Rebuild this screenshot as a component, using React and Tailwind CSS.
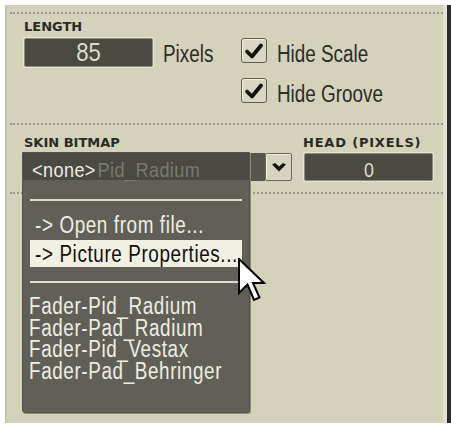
import React from "react";

const SANS = "font-['Liberation_Sans',Arial,sans-serif]";

function N({ className = "", children }) {
  return (
    <span className={`inline-block origin-left scale-x-[0.82] whitespace-nowrap ${SANS} ${className}`}>
      {children}
    </span>
  );
}

function Dotted() {
  return <div className="h-0 border-t-2 border-dotted border-[#9a998a]" />;
}

function Label({ children, className = "" }) {
  return (
    <div
      className={`h-[13px] leading-[13px] text-[13px] font-bold text-[#2a2a28] font-['DejaVu_Sans',sans-serif] whitespace-nowrap ${className}`}
    >
      {children}
    </div>
  );
}

function Check() {
  return (
    <div className="shrink-0 w-[26px] h-[25px] rounded-[3px] border-[1.5px] border-[#5f5e54] bg-[#d9d7c4] shadow-[inset_1px_1px_0_#f1efe0] flex items-center justify-center">
      <svg width="20" height="18" viewBox="0 0 20 18">
        <path d="M3 9.5 L8 14.5 L17 3.5" fill="none" stroke="#111" strokeWidth="3.8" strokeLinecap="round" strokeLinejoin="round" />
      </svg>
    </div>
  );
}

function CheckRow({ label }) {
  return (
    <div className="flex items-start gap-[10px] h-[25px]">
      <Check />
      <N className="text-[23px] leading-[32px] text-[#2c2c28]">{label}</N>
    </div>
  );
}

function Cursor() {
  return (
    <svg
      className="absolute left-[231px] top-[253px]"
      width="28"
      height="46"
      viewBox="0 0 28 46"
    >
      <polygon
        points="1,1 1,35 9.5,26.5 16,42 21.5,39.5 15,25 26,25"
        fill="#fff"
        stroke="#000"
        strokeWidth="2"
        strokeLinejoin="miter"
      />
    </svg>
  );
}

export default function App() {
  return (
    <div className="w-[451px] h-[428px] bg-white pt-[5px] pl-[5px] pb-[5px]">
      <div className="relative h-full bg-[#d4d2bb] border-l-2 border-l-[#c2c1b2] border-r-4 border-r-[#2d2d2a]">
        <div className="h-full border-r-4 border-r-[#e2e1d5] pl-[3px] pt-[7px]">
          <Dotted />
          {/* LENGTH section */}
          <div className="pl-[14px] pt-[6px] pb-[20px]">
            <Label>LENGTH</Label>
            <div className="flex items-start mt-[5px]">
              <div className="w-[129px] h-[29px] rounded-[2px] bg-[#4a4942] border border-[#8d8c7c] shadow-[0_0_0_1px_#e6e4d3] text-center">
                <span className={`inline-block scale-x-[0.85] ${SANS} text-[26px] leading-[27px] text-[#dedcce]`}>85</span>
              </div>
              <div className="w-[78px] ml-[10px] h-[29px]">
                <N className="text-[23px] leading-[32px] text-[#2c2c28]">Pixels</N>
              </div>
              <div className="flex flex-col gap-[15px]">
                <CheckRow label="Hide Scale" />
                <CheckRow label="Hide Groove" />
              </div>
            </div>
          </div>
          <Dotted />
          {/* SKIN BITMAP section */}
          <div className="pl-[14px] pt-[11px] pb-[11px] flex">
            <div className="flex flex-col">
              <Label>SKIN BITMAP</Label>
              <div className="flex mt-[4px] h-[28px]">
                <div className="w-[241px] h-full rounded-l-[2px] bg-[#56554d]" />
                <div className="w-[27px] h-full rounded-[2px] bg-[#d6d4c0] border border-[#6a695d] shadow-[inset_1px_1px_0_#f0eedf] flex items-center justify-center">
                  <svg width="14" height="9" viewBox="0 0 14 9">
                    <polygon points="0,1.5 3,0 7,3.5 11,0 14,1.5 7,8.5" fill="#111" />
                  </svg>
                </div>
              </div>
            </div>
            <div className="flex flex-col ml-[11px]">
              <Label className="tracking-[0.8px]">HEAD (PIXELS)</Label>
              <div className="mt-[4px] ml-[1px] w-[129px] h-[28px] rounded-[2px] bg-[#4a4942] border border-[#8d8c7c] shadow-[0_0_0_1px_#e6e4d3] text-center">
                <span className={`inline-block scale-x-[0.85] ${SANS} text-[21px] leading-[31px] text-[#dedcce]`}>0</span>
              </div>
            </div>
          </div>
          <Dotted />
        </div>

        {/* Dropdown popup */}
        <div className="absolute left-[15px] top-[147px] w-[228px] h-[261px] bg-[#616058] border border-[#55544c] rounded-b-[3px] shadow-[1px_1px_0_#8a897a]">
          <div className="h-[27px] bg-[#4a4943] pl-[9px] pt-[6px]">
            <N className="scale-x-[0.86] text-[21px] leading-[21px] tracking-[0.5px]">
              <span className="text-[#eeede2]">&lt;none&gt;</span>
              <span className="text-[#7b7a70] ml-[2px]">Pid_Radium</span>
            </N>
          </div>
          <div className="mt-[19px] mx-[7px] h-[2px] bg-[#dddccf]" />
          <div className="mt-[10px] mx-[7px]">
            <div className="h-[29px] pl-[5px]">
              <N className="text-[23px] leading-[28px] text-[#eeede2] tracking-[0.75px]">-&gt; Open from file...</N>
            </div>
            <div className="h-[27px] pl-[5px] bg-[#f1f0e2] overflow-hidden">
              <N className="text-[23px] leading-[28px] text-[#111] tracking-[0.75px]">-&gt; Picture Properties...</N>
            </div>
          </div>
          <div className="mt-[14px] mx-[7px] h-[2px] bg-[#dddccf]" />
          <div className="mt-[13px] pl-[6px] flex flex-col">
            {["Fader-Pid_Radium", "Fader-Pad_Radium", "Fader-Pid_Vestax", "Fader-Pad_Behringer"].map((t) => (
              <div key={t} className="h-[21.7px]">
                <N className="text-[23px] leading-[21.7px] text-[#eeede2] tracking-[0.75px]">{t}</N>
              </div>
            ))}
          </div>
        </div>

        <Cursor />
      </div>
    </div>
  );
}
